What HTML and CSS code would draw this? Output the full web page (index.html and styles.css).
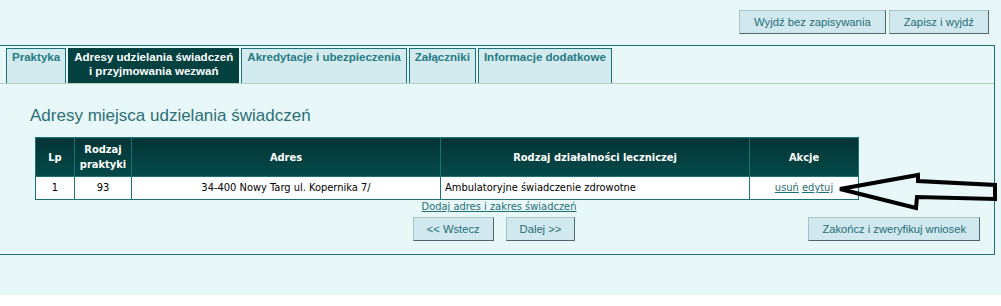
FILE: index.html
```html
<!DOCTYPE html>
<html lang="pl">
<head>
<meta charset="utf-8">
<title>Adresy miejsca udzielania świadczeń</title>
<link rel="stylesheet" href="styles.css">
</head>
<body>
<div class="page">
  <div class="topbar">
    <button class="btn wide">Wyjdź bez zapisywania</button>
    <button class="btn wide">Zapisz i wyjdź</button>
  </div>
  <div class="panel">
    <div class="tabs">
      <div class="tab">Praktyka</div>
      <div class="tab active">Adresy udzielania świadczeń<br>i przyjmowania wezwań</div>
      <div class="tab">Akredytacje i ubezpieczenia</div>
      <div class="tab">Załączniki</div>
      <div class="tab">Informacje dodatkowe</div>
    </div>
    <h2 class="title">Adresy miejsca udzielania świadczeń</h2>
    <table class="grid">
      <colgroup>
        <col class="c-lp"><col class="c-rodz"><col class="c-adr"><col class="c-dz"><col class="c-akc">
      </colgroup>
      <thead>
        <tr>
          <th>Lp</th>
          <th>Rodzaj<br>praktyki</th>
          <th>Adres</th>
          <th>Rodzaj działalności leczniczej</th>
          <th>Akcje</th>
        </tr>
      </thead>
      <tbody>
        <tr>
          <td class="center">1</td>
          <td class="center">93</td>
          <td class="center">34-400 Nowy Targ ul. Kopernika 7/</td>
          <td>Ambulatoryjne świadczenie zdrowotne</td>
          <td class="center"><a href="#" class="lnk">usuń</a> <a href="#" class="lnk">edytuj</a></td>
        </tr>
      </tbody>
    </table>
    <div class="addrow"><a href="#" class="lnk">Dodaj adres i zakres świadczeń</a></div>
    <div class="navrow">
      <div class="navcenter">
        <button class="btn">&lt;&lt; Wstecz</button>
        <button class="btn">Dalej &gt;&gt;</button>
      </div>
      <div class="navright">
        <button class="btn">Zakończ i zweryfikuj wniosek</button>
      </div>
    </div>
  </div>
  <svg class="arrow" width="171" height="55" viewBox="0 0 171 55">
    <polygon points="10,24 88,10 88,16 165,20 165,34 87,32 86,43" fill="none" stroke="#000" stroke-width="4" stroke-linejoin="miter"/>
  </svg>
</div>
</body>
</html>
```
FILE: styles.css
```css
html, body {
  margin: 0;
  padding: 0;
  background: #ffffff;
}

.page {
  position: relative;
  height: 295px;
  background: #e8f8f8;
  font-family: "Liberation Sans", Arial, sans-serif;
  overflow: hidden;
}

.topbar {
  display: flex;
  justify-content: flex-end;
  gap: 3px;
  padding: 10px 12px 0 0;
  height: 24px;
}

.btn {
  font-family: "Liberation Sans", Arial, sans-serif;
  font-size: 11.2px;
  color: #1f6d76;
  background: #d1e9ee;
  border: 1px solid;
  border-color: #a9c2c6 #4e6669 #4e6669 #a9c2c6;
  height: 24px;
  padding: 0 13px;
  margin: 0;
  line-height: 20px;
  cursor: pointer;
}

.btn.wide {
  padding: 0 14px;
  font-size: 11.3px;
}

.panel {
  margin-top: 11px;
  width: 994px;
  border-top: 1px solid #1b7178;
  border-right: 1px solid #1b7178;
  border-bottom: 1px solid #1b7178;
  padding: 2px 0 13px 0;
}

.tabs {
  display: flex;
  gap: 2px;
  padding-left: 6px;
  border-bottom: 1px solid #b3cfbd;
  height: 35px;
  align-items: stretch;
}

.tab {
  border: 1px solid #1b7178;
  border-bottom: none;
  background: #d3eaee;
  color: #267a82;
  font-weight: bold;
  font-size: 11.55px;
  line-height: 14px;
  padding: 1px 5px 0 5px;
  text-align: center;
  white-space: nowrap;
}

.tab.active {
  background: #034040;
  color: #ffffff;
  border-color: #034040;
}

.title {
  margin: 22px 0 11px 30px;
  font-weight: normal;
  font-size: 17px;
  line-height: 20px;
  color: #2c6f76;
}

.grid {
  margin-left: 35px;
  border-collapse: collapse;
  table-layout: fixed;
  width: 823px;
  font-family: "DejaVu Sans Condensed", "DejaVu Sans", sans-serif;
  font-stretch: condensed;
  font-size: 11px;
}

.c-lp { width: 39px; }
.c-rodz { width: 57px; }
.c-adr { width: 309px; }
.c-dz { width: 309px; }
.c-akc { width: 109px; }

.grid th, .grid td {
  border: 1px solid #1c7275;
}

.grid th {
  height: 38px;
  padding: 0;
  color: #ffffff;
  font-weight: bold;
  line-height: 15px;
  background: linear-gradient(#023434, #064a4a);
  text-align: center;
}

.grid td {
  height: 22px;
  padding: 0 4px;
  background: #ffffff;
  color: #000000;
  line-height: 14px;
}

.grid td.center {
  text-align: center;
}

.lnk {
  color: #1e6e76;
  text-decoration: underline;
}

.addrow {
  text-align: center;
  font-family: "DejaVu Sans Condensed", "DejaVu Sans", sans-serif;
  font-stretch: condensed;
  font-size: 11px;
  line-height: 13px;
  padding-left: 4px;
}

.navrow {
  display: grid;
  grid-template-columns: 1fr auto 1fr;
  margin-top: 4px;
  padding: 0 14px 0 8px;
}

.navcenter {
  grid-column: 2;
  display: flex;
  gap: 12px;
}

.navright {
  grid-column: 3;
  justify-self: end;
}

.arrow {
  position: absolute;
  left: 830px;
  top: 165px;
}
```
